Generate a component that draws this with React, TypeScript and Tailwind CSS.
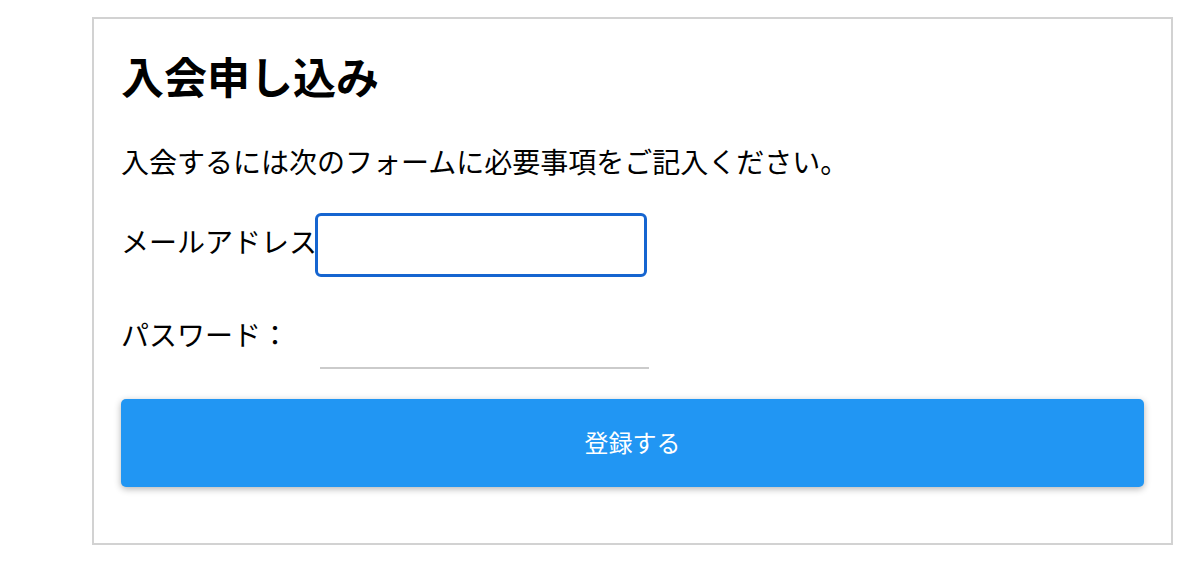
import React from 'react';

const font = { fontFamily: '"Noto Sans CJK JP", "Noto Sans", sans-serif' };

const App: React.FC = () => {
    return (
        <div className="min-h-screen bg-white pt-[17px] pl-[92px]" style={font}>
            {/* Signup card */}
            <div className="w-[1081px] border-2 border-[#d2d2d2] bg-white px-[27px] pt-[35px] pb-[56px] text-black">
                <h1 className="text-[43px] font-bold leading-none">入会申し込み</h1>

                <p className="mt-[50px] text-[28px] leading-none">
                    入会するには次のフォームに必要事項をご記入ください。
                </p>

                <form className="mt-[38px]" onSubmit={(e) => e.preventDefault()}>
                    {/* Email (focused) */}
                    <div className="flex items-center">
                        <label className="w-[194px] shrink-0 whitespace-nowrap pb-[8px] text-[28px] leading-none">
                            メールアドレス
                        </label>
                        <input
                            type="email"
                            className="h-[64px] w-[332px] rounded-[6px] border-[3px] border-[#1565d0] bg-white px-2 text-[24px] outline-none"
                        />
                    </div>

                    {/* Password */}
                    <div className="mt-[22px] flex items-center">
                        <label className="w-[199px] shrink-0 whitespace-nowrap text-[28px] leading-none">パスワード：</label>
                        <input
                            type="password"
                            className="h-[70px] w-[329px] border-0 border-b-2 border-[#cbcbcb] bg-transparent px-2 text-[24px] outline-none"
                        />
                    </div>

                    <button
                        type="submit"
                        className="mt-[30px] flex h-[88px] w-full items-center justify-center rounded-[5px] bg-[#2196f3] pb-[3px] text-[24px] leading-none text-white shadow-[0_2px_7px_rgba(0,0,0,0.3)]"
                    >
                        登録する
                    </button>
                </form>
            </div>
        </div>
    );
};

export default App;
